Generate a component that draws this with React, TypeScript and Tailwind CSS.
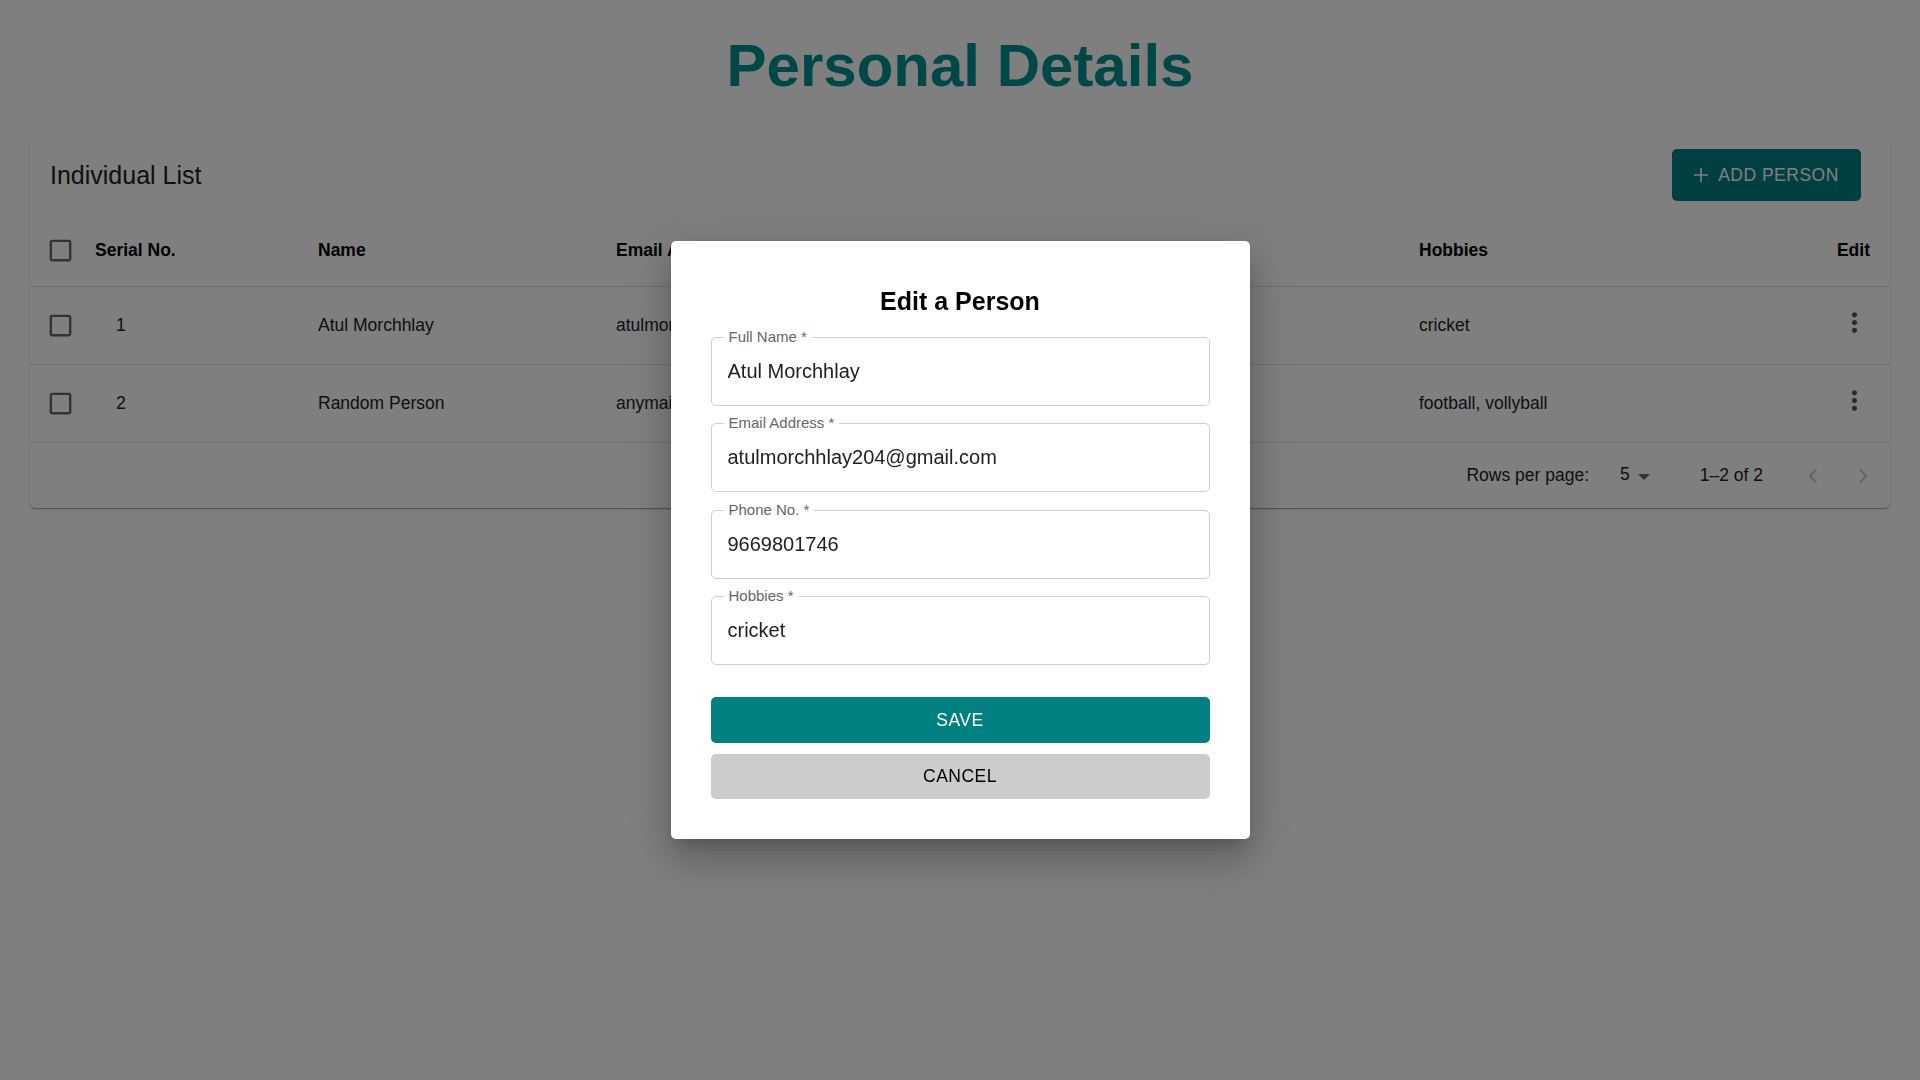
import React from "react";

interface Person {
  id: number;
  name: string;
  email: string;
  phone: string;
  hobbies: string;
}

const people: Person[] = [
  { id: 1, name: "Atul Morchhlay", email: "atulmorchhlay204@gmail.com", phone: "9669801746", hobbies: "cricket" },
  { id: 2, name: "Random Person", email: "anymail@gmail.com", phone: "9876543210", hobbies: "football, vollyball" },
];

const cols = "grid grid-cols-[65px_223px_298px_384px_419px_1fr_auto] items-center pr-[20px]";

function BoxIcon() {
  return (
    <svg viewBox="0 0 24 24" className="ml-[16px] h-[29px] w-[29px] fill-[#666666]">
      <path d="M19 5v14H5V5h14m0-2H5c-1.11 0-2 .9-2 2v14c0 1.1.89 2 2 2h14c1.1 0 2-.9 2-2V5c0-1.1-.9-2-2-2z" />
    </svg>
  );
}

function MoreIcon() {
  return (
    <svg viewBox="0 0 24 24" className="h-[31px] w-[31px] fill-[#555555]">
      <path d="M12 8c1.1 0 2-.9 2-2s-.9-2-2-2-2 .9-2 2 .9 2 2 2m0 2c-1.1 0-2 .9-2 2s.9 2 2 2 2-.9 2-2-.9-2-2-2m0 6c-1.1 0-2 .9-2 2s.9 2 2 2 2-.9 2-2-.9-2-2-2" />
    </svg>
  );
}

function Field({ label, value }: { label: string; value: string }) {
  return (
    <div className="relative h-[69px] rounded-[5px] border border-[#cfcfcf]">
      <span className="absolute -top-[10px] left-[12px] bg-white px-[5px] text-[15px] leading-[18px] text-[#666666]">
        {label} *
      </span>
      <input
        readOnly
        defaultValue={value}
        className="h-full w-full rounded-[5px] bg-transparent pl-[16px] text-[20px] text-[#212121] outline-none"
      />
    </div>
  );
}

export default function App() {
  return (
    <div className="min-h-screen bg-white font-['Liberation_Sans',Arial,sans-serif] text-[#212121]">
      <h1 className="pt-[30px] text-center text-[60px] font-bold leading-[72px] text-[#009090]">Personal Details</h1>

      <section className="mx-[30px] mt-[33px] rounded-[5px] bg-white shadow-[0_2px_1px_-1px_rgba(0,0,0,0.2),0_1px_1px_0_rgba(0,0,0,0.14),0_1px_3px_0_rgba(0,0,0,0.12)]">
        <div className="flex h-[80px] items-center justify-between pl-[20px] pr-[29px]">
          <h2 className="text-[25px] leading-[30px]">Individual List</h2>
          <button className="flex h-[52px] w-[189px] items-center justify-center gap-[10px] rounded-[5px] bg-[#008080] text-[17.5px] uppercase tracking-[0.5px] text-white">
            <svg viewBox="0 0 14 14" className="h-[14px] w-[14px] stroke-white" strokeWidth="1.6">
              <path d="M7 0v14M0 7h14" />
            </svg>
            Add Person
          </button>
        </div>

        <div className={`${cols} h-[72px] border-b border-[#e0e0e0] text-[17.5px] font-bold text-black`}>
          <BoxIcon />
          <span>Serial No.</span>
          <span>Name</span>
          <span>Email Address</span>
          <span>Phone No.</span>
          <span>Hobbies</span>
          <span>Edit</span>
        </div>

        {people.map((p) => (
          <div key={p.id} className={`${cols} h-[78px] border-b border-[#e0e0e0] text-[17.5px]`}>
            <BoxIcon />
            <span className="pl-[21px]">{p.id}</span>
            <span>{p.name}</span>
            <span>{p.email}</span>
            <span>{p.phone}</span>
            <span>{p.hobbies}</span>
            <span className="-mt-[6px] flex justify-end">
              <MoreIcon />
            </span>
          </div>
        ))}

        <div className="flex h-[65px] items-center justify-end pr-[12px] text-[17.5px]">
          <span>Rows per page:</span>
          <span className="-mt-[2px] ml-[31px]">5</span>
          <svg viewBox="0 0 30 30" className="h-[30px] w-[30px] fill-[#666666]">
            <path d="M8 13l6 6 6-6z" />
          </svg>
          <span className="ml-[40px]">1–2 of 2</span>
          <svg viewBox="0 0 30 30" className="ml-[35px] h-[30px] w-[30px] fill-none stroke-[#c8c8c8]" strokeWidth="2.2">
            <path d="M18 8.5l-6 6.5 6 6.5" />
          </svg>
          <svg viewBox="0 0 30 30" className="ml-[20px] h-[30px] w-[30px] fill-none stroke-[#c8c8c8]" strokeWidth="2.2">
            <path d="M12 8.5l6 6.5-6 6.5" />
          </svg>
        </div>
      </section>

      <div className="fixed inset-0 flex items-center justify-center bg-black/50">
        <div className="w-[579px] rounded-[5px] bg-white px-[40px] py-[40px] shadow-[0_11px_15px_-7px_rgba(0,0,0,0.2),0_24px_38px_3px_rgba(0,0,0,0.14),0_9px_46px_8px_rgba(0,0,0,0.12)]">
          <h3 className="text-center text-[25px] font-bold leading-[40px] text-black">Edit a Person</h3>
          <div className="mt-[16px] flex flex-col gap-[17.3px]">
            <Field label="Full Name" value="Atul Morchhlay" />
            <Field label="Email Address" value="atulmorchhlay204@gmail.com" />
            <Field label="Phone No." value="9669801746" />
            <Field label="Hobbies" value="cricket" />
          </div>
          <button className="mt-[32px] h-[46px] w-full rounded-[5px] bg-[#008080] text-[17.5px] uppercase tracking-[0.5px] text-white">
            Save
          </button>
          <button className="mt-[11px] h-[45px] w-full rounded-[5px] bg-[#cccccc] text-[17.5px] uppercase tracking-[0.5px] text-black">
            Cancel
          </button>
        </div>
      </div>
    </div>
  );
}
